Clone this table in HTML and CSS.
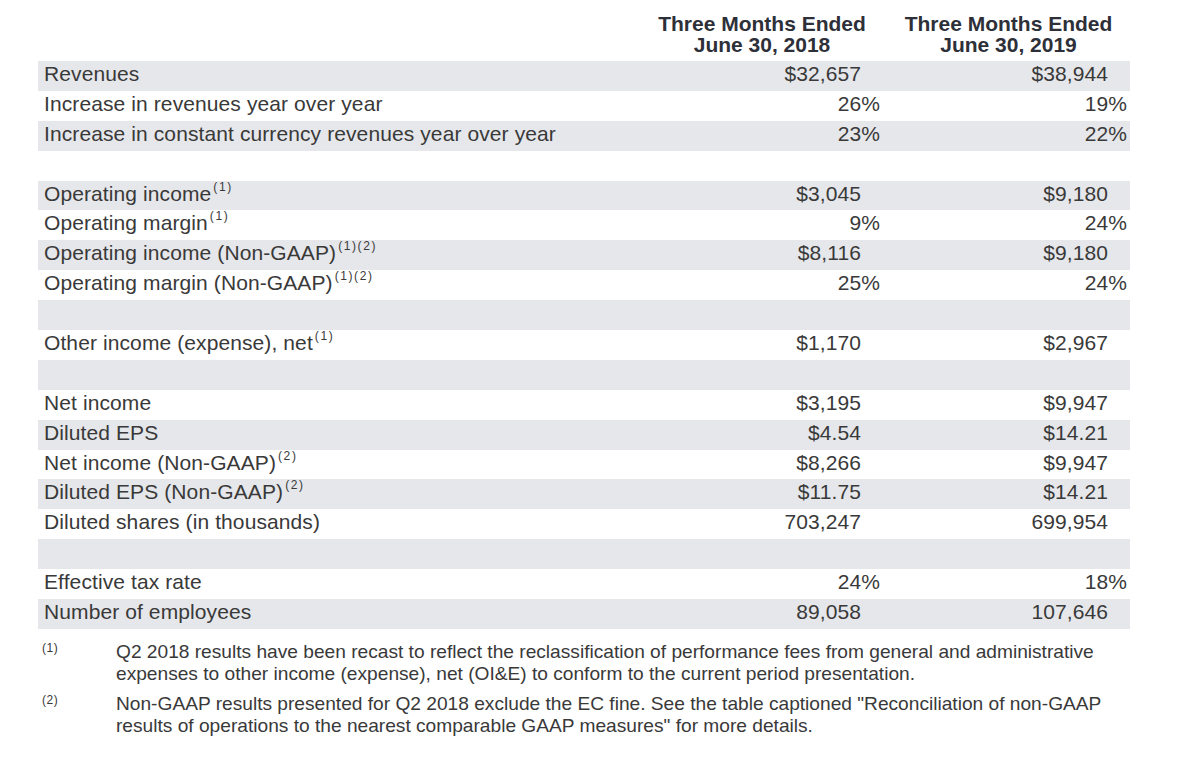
FILE: index.html
```html
<!DOCTYPE html>
<html lang="en">
<head>
<meta charset="utf-8">
<title>Financial Summary</title>
<link rel="stylesheet" href="styles.css">
</head>
<body>
<div class="page">
  <div class="head">
    <div class="head-label"></div>
    <div class="head-col c1">Three Months Ended<br>June 30, 2018</div>
    <div class="head-col c2">Three Months Ended<br>June 30, 2019</div>
  </div>
  <div class="table">
    <div class="row"><div class="label">Revenues</div><div class="val amt">$32,657</div><div class="val amt">$38,944</div></div>
    <div class="row"><div class="label">Increase in revenues year over year</div><div class="val">26%</div><div class="val">19%</div></div>
    <div class="row"><div class="label">Increase in constant currency revenues year over year</div><div class="val">23%</div><div class="val">22%</div></div>
    <div class="row"><div class="label"></div><div class="val"></div><div class="val"></div></div>
    <div class="row"><div class="label">Operating income<sup class="fn">(1)</sup></div><div class="val amt">$3,045</div><div class="val amt">$9,180</div></div>
    <div class="row"><div class="label">Operating margin<sup class="fn">(1)</sup></div><div class="val">9%</div><div class="val">24%</div></div>
    <div class="row"><div class="label">Operating income (Non-GAAP)<sup class="fn">(1)(2)</sup></div><div class="val amt">$8,116</div><div class="val amt">$9,180</div></div>
    <div class="row"><div class="label">Operating margin (Non-GAAP)<sup class="fn">(1)(2)</sup></div><div class="val">25%</div><div class="val">24%</div></div>
    <div class="row"><div class="label"></div><div class="val"></div><div class="val"></div></div>
    <div class="row"><div class="label">Other income (expense), net<sup class="fn">(1)</sup></div><div class="val amt">$1,170</div><div class="val amt">$2,967</div></div>
    <div class="row"><div class="label"></div><div class="val"></div><div class="val"></div></div>
    <div class="row"><div class="label">Net income</div><div class="val amt">$3,195</div><div class="val amt">$9,947</div></div>
    <div class="row"><div class="label">Diluted EPS</div><div class="val amt">$4.54</div><div class="val amt">$14.21</div></div>
    <div class="row"><div class="label">Net income (Non-GAAP)<sup class="fn">(2)</sup></div><div class="val amt">$8,266</div><div class="val amt">$9,947</div></div>
    <div class="row"><div class="label">Diluted EPS (Non-GAAP)<sup class="fn">(2)</sup></div><div class="val amt">$11.75</div><div class="val amt">$14.21</div></div>
    <div class="row"><div class="label">Diluted shares (in thousands)</div><div class="val amt">703,247</div><div class="val amt">699,954</div></div>
    <div class="row"><div class="label"></div><div class="val"></div><div class="val"></div></div>
    <div class="row"><div class="label">Effective tax rate</div><div class="val">24%</div><div class="val">18%</div></div>
    <div class="row"><div class="label">Number of employees</div><div class="val amt">89,058</div><div class="val amt">107,646</div></div>
  </div>
  <div class="notes">
    <div class="note"><span class="mark">(1)</span><p class="note-text">Q2 2018 results have been recast to reflect the reclassification of performance fees from general and administrative expenses to other income (expense), net (OI&amp;E) to conform to the current period presentation.</p></div>
    <div class="note"><span class="mark">(2)</span><p class="note-text">Non-GAAP results presented for Q2 2018 exclude the EC fine. See the table captioned "Reconciliation of non-GAAP results of operations to the nearest comparable GAAP measures" for more details.</p></div>
  </div>
</div>
</body>
</html>
```
FILE: styles.css
```css
html, body {
  margin: 0;
  padding: 0;
  background: #ffffff;
}

body {
  font-family: "Liberation Sans", Arial, sans-serif;
  color: #393939;
}

.page {
  padding-left: 38px;
  width: 1092px;
}

.head {
  display: grid;
  grid-template-columns: 1fr 247px 247px;
  padding-top: 13px;
  margin-bottom: 6px;
}

.head-col {
  font-weight: bold;
  font-size: 21px;
  line-height: 21px;
  text-align: center;
  color: #2e3039;
}

.head-col.c1 {
  padding-left: 5px;
}

.head-col.c2 {
  padding-left: 4px;
}

.table {
  display: flex;
  flex-direction: column;
}

.row {
  display: grid;
  grid-template-columns: 1fr 247px 247px;
  height: 29.9px;
  font-size: 21px;
  line-height: 26px;
  letter-spacing: 0.1px;
}

.row:nth-child(odd) {
  background: #e6e7ea;
}

.label {
  padding-left: 6px;
  white-space: nowrap;
}

.val {
  text-align: right;
  padding-right: 3px;
}

.val.amt {
  padding-right: 22px;
}

.fn {
  font-size: 12px;
  letter-spacing: 1.6px;
  line-height: 0;
  vertical-align: 10px;
  margin-left: 2px;
}

.notes {
  margin-top: 12px;
  display: flex;
  flex-direction: column;
  gap: 7px;
}

.note {
  display: grid;
  grid-template-columns: 78px 1010px;
}

.mark {
  font-size: 12px;
  line-height: 14px;
  padding-left: 4px;
  padding-top: 0;
  letter-spacing: 0.5px;
}

.note-text {
  margin: 0;
  font-size: 19.15px;
  line-height: 22.5px;
}
```
